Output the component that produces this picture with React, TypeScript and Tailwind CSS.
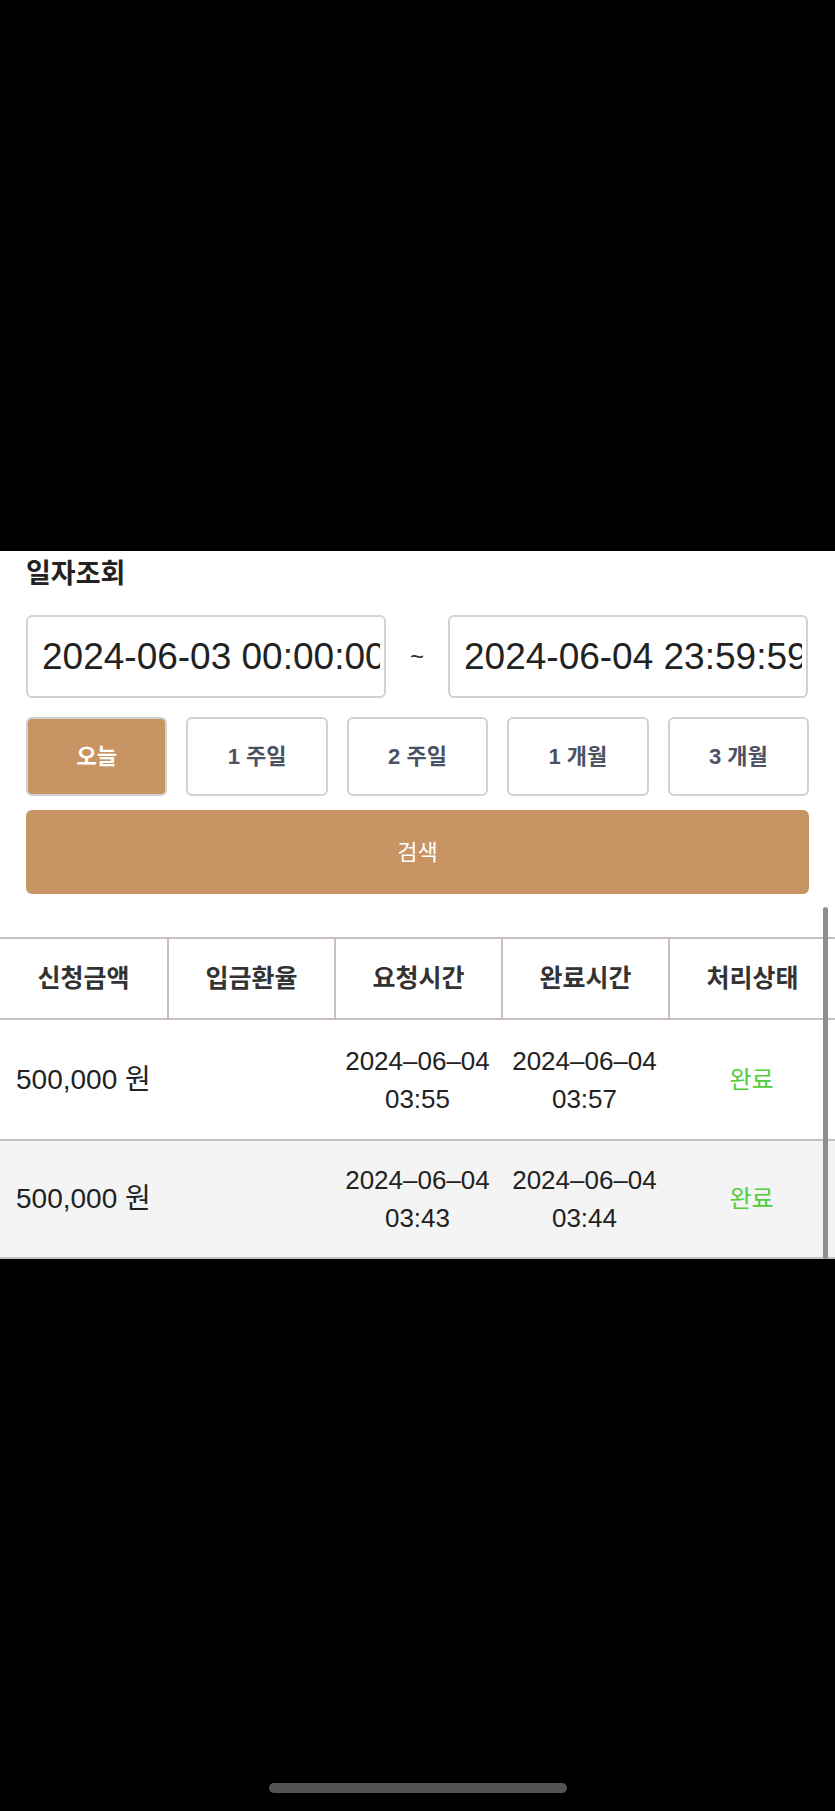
import { useState } from "react";

const FONT = { fontFamily: '"Liberation Sans", "Noto Sans CJK KR", sans-serif' };

const periods = ["오늘", "1 주일", "2 주일", "1 개월", "3 개월"];
const headers = ["신청금액", "입금환율", "요청시간", "완료시간", "처리상태"];

const rows = [
  { amount: "500,000 원", rate: "", reqDate: "2024–06–04", reqTime: "03:55", doneDate: "2024–06–04", doneTime: "03:57", status: "완료" },
  { amount: "500,000 원", rate: "", reqDate: "2024–06–04", reqTime: "03:43", doneDate: "2024–06–04", doneTime: "03:44", status: "완료" },
];

export default function App() {
  const [period, setPeriod] = useState(0);

  return (
    <div className="w-[835px] min-h-[1811px] bg-black flex flex-col" style={FONT}>
      <div className="h-[551px] bg-black" />

      <div className="relative bg-white">
        <div className="px-[26px]">
          <div className="h-[46px] flex items-center text-[27px] font-bold text-[#222]">일자조회</div>

          <div className="mt-[18px] h-[83px] flex">
            <input
              readOnly
              value="2024-06-03 00:00:00"
              className="w-[360px] h-full border-2 border-[#d2d2d2] rounded-[6px] pl-[14px] pr-[4px] text-[37px] text-[#222] outline-none bg-white"
              style={FONT}
            />
            <div className="w-[62px] flex items-center justify-center text-[24px] text-[#333]">~</div>
            <input
              readOnly
              value="2024-06-04 23:59:59"
              className="w-[360px] h-full border-2 border-[#d2d2d2] rounded-[6px] pl-[14px] pr-[4px] text-[37px] text-[#222] outline-none bg-white"
              style={FONT}
            />
          </div>

          <div className="mt-[19px] h-[79px] grid grid-cols-5 gap-[19px]">
            {periods.map((p, i) => (
              <button
                key={p}
                onClick={() => setPeriod(i)}
                className={
                  i === period
                    ? "h-full rounded-[6px] border-2 border-[#d2d2d2] bg-[#c89463] text-white text-[22px] font-bold"
                    : "h-full rounded-[6px] border-2 border-[#d2d2d2] bg-white text-[#4b5263] text-[22px] font-bold"
                }
              >
                {p}
              </button>
            ))}
          </div>

          <button className="mt-[14px] w-full h-[84px] rounded-[6px] bg-[#c89463] text-white text-[22px]">
            검색
          </button>
        </div>

        <div className="mt-[43px]">
          <div className="grid grid-cols-5 h-[83px] border-y-2 border-[#c9bfbf]">
            {headers.map((h, i) => (
              <div
                key={h}
                className={
                  i === 0
                    ? "flex items-center justify-center text-[25px] font-bold text-[#333]"
                    : "flex items-center justify-center text-[25px] font-bold text-[#333] border-l-2 border-[#c9bfbf]"
                }
              >
                {h}
              </div>
            ))}
          </div>

          {rows.map((r, i) => (
            <div
              key={i}
              className={
                i === 0
                  ? "grid grid-cols-5 h-[121px] border-b-2 border-[#c9bfbf] bg-white text-[26px] text-[#222]"
                  : "grid grid-cols-5 h-[118px] border-b-2 border-[#c9bfbf] bg-[#f4f4f4] text-[26px] text-[#222]"
              }
            >
              <div className="flex items-center pl-[16px] whitespace-nowrap text-[28px]">{r.amount}</div>
              <div className="flex items-center justify-center">{r.rate}</div>
              <div className="flex flex-col items-center justify-center leading-[38px]">
                <span>{r.reqDate}</span>
                <span>{r.reqTime}</span>
              </div>
              <div className="flex flex-col items-center justify-center leading-[38px]">
                <span>{r.doneDate}</span>
                <span>{r.doneTime}</span>
              </div>
              <div className="flex items-center justify-center text-[24px] text-[#52cc3a]">{r.status}</div>
            </div>
          ))}
        </div>

        <div className="absolute right-[7px] top-[356px] bottom-0 w-[5px] rounded-full bg-[#8e8e8e]" />
      </div>

      <div className="flex-1 bg-black flex items-end justify-center pb-[18px]">
        <div className="w-[298px] h-[10px] rounded-full bg-[#545454]" />
      </div>
    </div>
  );
}
